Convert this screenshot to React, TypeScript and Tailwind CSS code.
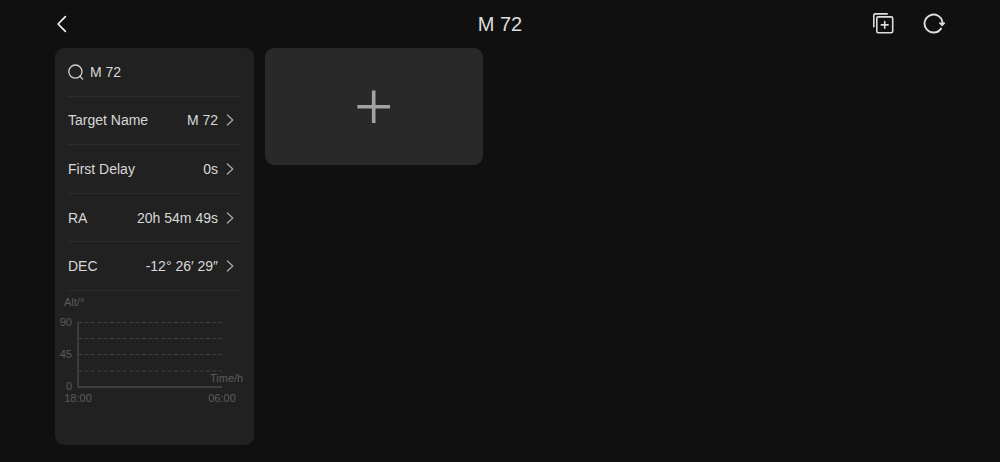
import { useState } from "react";

type Field = { label: string; value: string };

const fields: Field[] = [
  { label: "Target Name", value: "M 72" },
  { label: "First Delay", value: "0s" },
  { label: "RA", value: "20h 54m 49s" },
  { label: "DEC", value: "-12° 26′ 29″" },
];

function Header({ title }: { title: string }) {
  return (
    <header className="grid h-12 grid-cols-[1fr_auto_1fr] items-center pr-[55px] pl-[55px]">
      <button type="button" aria-label="Back" className="flex h-8 w-8 items-center">
        <svg width="14" height="18" viewBox="0 0 14 18" fill="none" stroke="#f0f0f0" strokeWidth="1.7">
          <path d="M10.4 1.600 3.100 9l7.300 7.400" strokeLinecap="round" strokeLinejoin="round" />
        </svg>
      </button>
      <h1 className="text-xl leading-6 text-[#dedede]">{title}</h1>
      <div className="flex items-center gap-7 justify-self-end">
        <button type="button" aria-label="Duplicate plan">
          <svg width="22" height="22" viewBox="0 0 22 22" fill="none" stroke="#dedede" strokeWidth="1.6" strokeLinecap="round">
            <path d="M.8 13.800V2.300Q.8 .9 2.200 .9H14.200" />
            <rect x="3.800" y="3.900" width="15.900" height="15.900" rx="1.500" />
            <path d="M11.700 8.500v6.800M8.300 11.900h6.800" />
          </svg>
        </button>
        <button type="button" aria-label="Refresh">
          <svg width="22" height="22" viewBox="0 0 22 22" fill="none" stroke="#dedede" strokeWidth="1.900">
            <path d="M18 15.600A9 9 0 1 1 19.500 9.500" strokeLinecap="round" />
            <path d="M16.600 10h5l-2.500 2.600z" fill="#dedede" strokeWidth="1.200" strokeLinejoin="round" />
          </svg>
        </button>
      </div>
    </header>
  );
}

function FieldRow({ label, value }: Field) {
  return (
    <button type="button" className="flex items-center border-b border-[#2c2c2c] pr-1.5 text-left">
      <span className="flex-1">{label}</span>
      <span>{value}</span>
      <svg className="ml-2" width="8" height="12" viewBox="0 0 8 12" fill="none" stroke="#a8a8a8" strokeWidth="1.300">
        <path d="M1.400 1l5.400 5L1.400 11" strokeLinecap="round" strokeLinejoin="round" />
      </svg>
    </button>
  );
}

function AltitudeChart() {
  return (
    <svg
      role="img"
      aria-label="Altitude over time"
      viewBox="0 0 199 120"
      className="w-full fill-[#5c5c5c] text-[11px]"
    >
      <text x="9" y="15">Alt/°</text>
      <g textAnchor="end">
        <text x="17" y="35">90</text>
        <text x="17" y="67">45</text>
        <text x="17" y="99">0</text>
      </g>
      <g stroke="#414141" strokeDasharray="4 2.400">
        <path d="M23 31.500h144M23 47.500h144M23 63.500h144M23 80h144" />
      </g>
      <path d="M23 31v65M22.500 96h144.500" fill="none" stroke="#4a4a4a" strokeWidth="1.300" />
      <text x="155" y="91">Time/h</text>
      <g textAnchor="middle">
        <text x="23" y="111">18:00</text>
        <text x="167" y="111">06:00</text>
      </g>
    </svg>
  );
}

export default function App() {
  const [query, setQuery] = useState("M 72");

  return (
    <div className="flex min-h-screen flex-col bg-[#101010] font-['Liberation_Sans',Arial,sans-serif]">
      <Header title="M 72" />
      <main className="flex flex-1 items-start gap-[11px] pr-[55px] pb-[17px] pl-[55px]">
        <aside className="w-[199px] shrink-0 self-stretch rounded-[9px] bg-[#212121] text-sm text-[#d8d8d8]">
          <div className="mr-3.5 ml-[13px] grid h-[243px] grid-rows-5">
            <div className="flex items-center gap-1.5 border-b border-[#2c2c2c]">
              <label htmlFor="target-search">
                <svg width="16" height="16" viewBox="0 0 16 16" fill="none" stroke="#d0d0d0" strokeWidth="1.300">
                  <circle cx="7.400" cy="7.600" r="6.600" />
                  <path d="M11.900 12.300l2.800 2.800" strokeLinecap="round" />
                </svg>
              </label>
              <input
                id="target-search"
                type="text"
                aria-label="Search target"
                value={query}
                onChange={(event) => setQuery(event.target.value)}
                className="h-8 w-full min-w-0 bg-transparent outline-none"
              />
            </div>
            {fields.map((field) => (
              <FieldRow key={field.label} {...field} />
            ))}
          </div>
          <AltitudeChart />
        </aside>
        <button
          type="button"
          aria-label="Add exposure"
          className="flex h-[117px] w-[218px] items-center justify-center rounded-[9px] bg-[#292929]"
        >
          <svg width="34" height="34" viewBox="0 0 34 34" stroke="#a3a3a3" strokeWidth="3.600">
            <path d="M16.700 .6v32.400M.4 16.800h32.600" />
          </svg>
        </button>
      </main>
    </div>
  );
}
